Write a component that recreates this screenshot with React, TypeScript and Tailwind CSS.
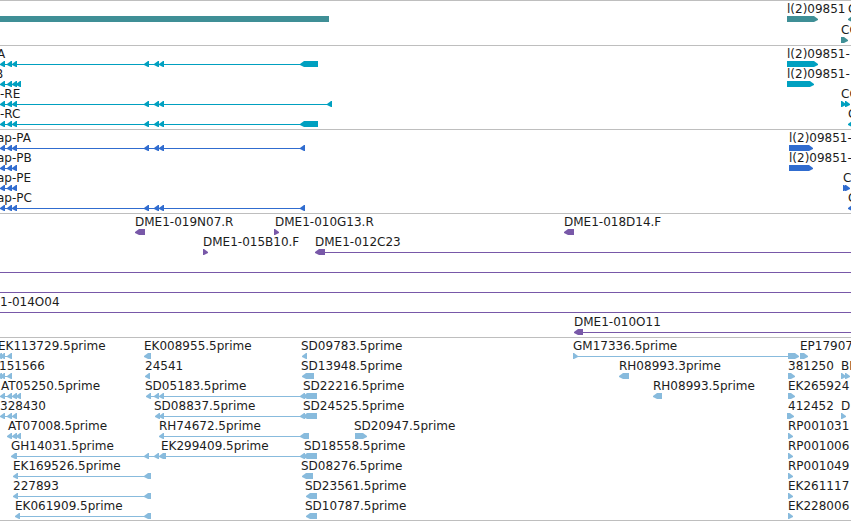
type Exon = [number, number];

type Feature = {
  label?: string;
  labelX?: number;
  strand: "+" | "-" | "none";
  exons: Exon[];
  // the intron line runs from the first to the last exon unless a span is given
  span?: Exon;
};

type Track = {
  id: string;
  name: string;
  color: string;
  className: string;
  rows: Feature[][];
};

// anything past the right edge of the window is clipped
const OFF_RIGHT = 4000;
const EXON_HEIGHT = 6;
const TIP = 5;

const left3: Exon[] = [[0, 5], [7, 12], [12, 17]];
const left4: Exon[] = [...left3, [16, 21]];
const mid: Exon[] = [[144, 149], [154, 159], [159, 164]];
const estEnd: Exon[] = [[300, 305], [303, 317]];

const fwd = (label: string, labelX: number, exons: Exon[], span?: Exon): Feature => ({
  label,
  labelX,
  strand: "+",
  exons,
  span,
});

const rev = (label: string, labelX: number, exons: Exon[], span?: Exon): Feature => ({
  label,
  labelX,
  strand: "-",
  exons,
  span,
});

const tracks: Track[] = [
  {
    id: "gene",
    name: "Genes",
    color: "#3f8f96",
    className: "gap-px pb-[2px]",
    rows: [
      [
        { strand: "none", exons: [[0, 329]] },
        fwd("l(2)09851", 787, [[787, 818]]),
        rev("C", 848, [[848, 860]]),
      ],
      [fwd("CG", 841, [[841, 848]])],
    ],
  },
  {
    id: "mrna",
    name: "Transcripts",
    color: "#00a0c0",
    className: "pb-[2px]",
    rows: [
      [
        rev("A", -3, [...left3, ...mid, [300, 318]]),
        fwd("l(2)09851-", 787, [[787, 818]]),
      ],
      [rev("B", -5, left4), fwd("l(2)09851-", 787, [[787, 814]])],
      [
        rev("-RE", 0, [...left3, ...mid, [327, 332]]),
        fwd("CG", 841, [[841, 846], [845, 850]]),
      ],
      [
        rev("-RC", 0, [...left3, ...mid, [300, 318]]),
        rev("C", 848, [[848, 860]]),
      ],
    ],
  },
  {
    id: "cds",
    name: "Coding sequences",
    color: "#306ccf",
    className: "pb-[2px]",
    rows: [
      [
        rev("ap-PA", -3, [...left3, ...mid, [300, 305]]),
        fwd("l(2)09851-", 789, [[789, 813]]),
      ],
      [rev("ap-PB", -3, left3), fwd("l(2)09851-", 789, [[789, 813]])],
      [rev("ap-PE", -3, left3), fwd("C", 843, [[843, 848], [845, 850]])],
      [
        rev("ap-PC", -3, [...left3, ...mid, [300, 305]]),
        rev("C", 848, [[848, 860]]),
      ],
    ],
  },
  {
    id: "bac",
    name: "BAC ends",
    color: "#7858a8",
    className: "pb-[2px]",
    rows: [
      [
        rev("DME1-019N07.R", 135, [[135, 145]]),
        fwd("DME1-010G13.R", 275, [[274, 279]]),
        rev("DME1-018D14.F", 564, [[564, 574]]),
      ],
      [
        fwd("DME1-015B10.F", 203, [[203, 208]]),
        rev("DME1-012C23", 315, [[315, 325]], [315, OFF_RIGHT]),
      ],
      [{ strand: "none", exons: [], span: [0, OFF_RIGHT] }],
      [{ strand: "none", exons: [], span: [0, OFF_RIGHT] }],
      [{ label: "1-014O04", labelX: 0, strand: "none", exons: [], span: [0, OFF_RIGHT] }],
      [rev("DME1-010O11", 574, [[574, 583]], [574, OFF_RIGHT])],
    ],
  },
  {
    id: "est",
    name: "ESTs",
    color: "#88bbdd",
    className: "pb-px",
    rows: [
      [
        rev("EK113729.5prime", -2, [[-3, 2], [0, 5], [7, 12]]),
        rev("EK008955.5prime", 144, [[144, 151]]),
        rev("SD09783.5prime", 301, [[302, 307]]),
        fwd("GM17336.5prime", 573, [[573, 578], [788, 799]]),
        fwd("EP17907", 800, [[800, 808]]),
      ],
      [
        rev("151566", -1, [[-3, 2], [0, 5], [7, 12]]),
        rev("24541", 145, [[145, 150]]),
        rev("SD13948.5prime", 301, [[302, 314]]),
        rev("RH08993.3prime", 619, [[619, 629]]),
        fwd("381250", 788, [[788, 795]]),
        fwd("BF", 841, [[841, 846], [845, 850]]),
      ],
      [
        rev("AT05250.5prime", 1, left4),
        rev("SD05183.5prime", 145, [[146, 151], [154, 159], [159, 164], ...estEnd]),
        rev("SD22216.5prime", 303, []),
        rev("RH08993.5prime", 653, [[653, 662]]),
        fwd("EK265924", 788, [[788, 795]]),
      ],
      [
        rev("328430", 0, left3),
        rev("SD08837.5prime", 154, [[155, 160], [159, 164], ...estEnd]),
        rev("SD24525.5prime", 303, []),
        fwd("412452", 788, [[787, 794]]),
        fwd("D", 841, [[841, 846]]),
      ],
      [
        rev("AT07008.5prime", 8, [[7, 12], [12, 17], [16, 21]]),
        rev("RH74672.5prime", 159, [[159, 164], [300, 309]]),
        fwd("SD20947.5prime", 354, [[355, 367]]),
        fwd("RP001031", 788, [[788, 793]]),
      ],
      [
        rev("GH14031.5prime", 11, [[11, 17], [144, 149]]),
        rev("EK299409.5prime", 161, [[154, 159], [159, 166], ...estEnd], [149, 317]),
        rev("SD18558.5prime", 304, []),
        fwd("RP001006", 788, [[788, 793]]),
      ],
      [
        rev("EK169526.5prime", 13, [[13, 18], [144, 151]]),
        rev("SD08276.5prime", 301, [[302, 313]]),
        fwd("RP001049", 788, [[788, 793]]),
      ],
      [
        rev("227893", 13, [[13, 18], [144, 151]]),
        rev("SD23561.5prime", 305, [[306, 317]]),
        fwd("EK261117", 788, [[788, 793]]),
      ],
      [
        rev("EK061909.5prime", 15, [[15, 20], [144, 151]]),
        rev("SD10787.5prime", 305, [[306, 317]]),
        fwd("EK228006", 788, [[788, 793]]),
      ],
    ],
  },
];

function exonPoints([a, b]: Exon, strand: Feature["strand"]) {
  const h = EXON_HEIGHT;
  const tip = Math.min(TIP, b - a);
  if (strand === "-") {
    return `${a},3 ${a + tip - 1},0 ${b},0 ${b},${h} ${a + tip - 1},${h} ${a},4`;
  }
  if (strand === "+") {
    return `${a},0 ${b - tip + 1},0 ${b},3 ${b},4 ${b - tip + 1},${h} ${a},${h}`;
  }
  return `${a},0 ${b},0 ${b},${h} ${a},${h}`;
}

function FeatureGlyph({ feature }: { feature: Feature }) {
  const { exons, strand } = feature;
  const span = feature.span ?? (exons.length > 1 ? [exons[0][0], exons[exons.length - 1][1] - 1] : null);

  return (
    <g>
      {span && <rect x={span[0]} y={3} width={span[1] - span[0]} height={1} shapeRendering="crispEdges" />}
      {exons.map((exon, i) => (
        <polygon key={i} points={exonPoints(exon, strand)} />
      ))}
    </g>
  );
}

function TrackRow({ features, color }: { features: Feature[]; color: string }) {
  return (
    <li>
      <div className="relative h-[14px]">
        {features.map(
          (feature, i) =>
            feature.label && (
              <span key={i} className="absolute top-0 whitespace-nowrap" style={{ left: feature.labelX }}>
                {feature.label}
              </span>
            )
        )}
      </div>
      <svg className="block h-[6px] w-full" fill={color} aria-hidden="true">
        {features.map((feature, i) => (
          <FeatureGlyph key={i} feature={feature} />
        ))}
      </svg>
    </li>
  );
}

export default function App() {
  return (
    <main className="w-full overflow-hidden border-b border-[#bebebe] bg-white font-['DejaVu_Sans',sans-serif] text-[12px] leading-[14px] text-[#1c1c1c]">
      {tracks.map((track) => (
        <section key={track.id} aria-label={track.name} className="border-t border-[#bebebe] pt-px">
          <ul className={`flex flex-col ${track.className}`}>
            {track.rows.map((features, i) => (
              <TrackRow key={i} features={features} color={track.color} />
            ))}
          </ul>
        </section>
      ))}
    </main>
  );
}
